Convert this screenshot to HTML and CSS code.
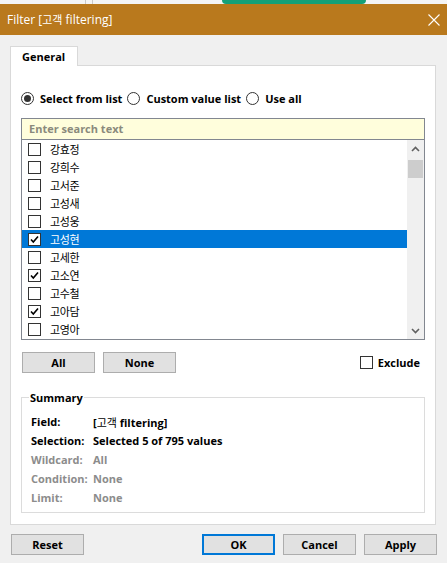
FILE: index.html
```html
<!DOCTYPE html>
<html lang="ko">
<head>
<meta charset="utf-8">
<title>Filter</title>
<link rel="stylesheet" href="styles.css">
</head>
<body>
<div class="strip"><span class="gap-a"></span><span class="vline"></span><span class="gap-b"></span><span class="vline"></span><span class="gap-c"></span><span class="pill"></span></div>
<div class="titlebar">
  <span class="title">Filter [<span class="ko">고객</span> filtering]</span>
  <svg class="close" width="12" height="12" viewBox="0 0 12 12"><path d="M0.5 0.5 L11.5 11.5 M11.5 0.5 L0.5 11.5" stroke="#ffffff" stroke-width="1.1" fill="none"/></svg>
</div>
<div class="dialog">
  <div class="tabrow"><div class="tab">General</div><div class="tabfill"></div></div>
  <div class="panel">
    <div class="radios">
      <label class="radio"><span class="rb on"></span>Select from list</label>
      <label class="radio"><span class="rb"></span>Custom value list</label>
      <label class="radio"><span class="rb"></span>Use all</label>
    </div>
    <div class="search">Enter search text</div>
    <div class="list">
      <div class="rows">
        <div class="row"><span class="cb"></span><span class="name">강효정</span></div>
        <div class="row"><span class="cb"></span><span class="name">강희수</span></div>
        <div class="row"><span class="cb"></span><span class="name">고서준</span></div>
        <div class="row"><span class="cb"></span><span class="name">고성새</span></div>
        <div class="row"><span class="cb"></span><span class="name">고성웅</span></div>
        <div class="row sel"><span class="cb on"><svg width="11" height="11" viewBox="0 0 11 11"><path d="M2 5.5 L4.3 8 L9 2.5" stroke="#000" stroke-width="1.6" fill="none"/></svg></span><span class="name">고성현</span></div>
        <div class="row"><span class="cb"></span><span class="name">고세한</span></div>
        <div class="row"><span class="cb on"><svg width="11" height="11" viewBox="0 0 11 11"><path d="M2 5.5 L4.3 8 L9 2.5" stroke="#000" stroke-width="1.6" fill="none"/></svg></span><span class="name">고소연</span></div>
        <div class="row"><span class="cb"></span><span class="name">고수철</span></div>
        <div class="row"><span class="cb on"><svg width="11" height="11" viewBox="0 0 11 11"><path d="M2 5.5 L4.3 8 L9 2.5" stroke="#000" stroke-width="1.6" fill="none"/></svg></span><span class="name">고아담</span></div>
        <div class="row"><span class="cb"></span><span class="name">고영아</span></div>
      </div>
      <div class="scrollbar">
        <div class="arrow"><svg width="9" height="6" viewBox="0 0 9 6"><path d="M1 5 L4.5 1.5 L8 5" stroke="#606060" stroke-width="1.6" fill="none"/></svg></div>
        <div class="thumb"></div>
        <div class="track"></div>
        <div class="arrow"><svg width="9" height="6" viewBox="0 0 9 6"><path d="M1 1 L4.5 4.5 L8 1" stroke="#606060" stroke-width="1.6" fill="none"/></svg></div>
      </div>
    </div>
    <div class="listbtns">
      <button class="btn">All</button>
      <button class="btn">None</button>
      <label class="exclude"><span class="cb"></span>Exclude</label>
    </div>
    <fieldset class="summary">
      <legend>Summary</legend>
      <div class="grid">
        <span class="lab">Field:</span><span class="val">[<span class="ko">고객</span> filtering]</span>
        <span class="lab">Selection:</span><span class="val">Selected 5 of 795 values</span>
        <span class="lab dim">Wildcard:</span><span class="val dim">All</span>
        <span class="lab dim">Condition:</span><span class="val dim">None</span>
        <span class="lab dim">Limit:</span><span class="val dim">None</span>
      </div>
    </fieldset>
  </div>
  <div class="footer">
    <button class="btn">Reset</button>
    <span class="spacer"></span>
    <button class="btn ok">OK</button>
    <button class="btn">Cancel</button>
    <button class="btn">Apply</button>
  </div>
</div>
</body>
</html>
```
FILE: styles.css
```css
* { box-sizing: border-box; }
html, body { margin: 0; padding: 0; }
body {
  width: 447px;
  height: 563px;
  overflow: hidden;
  background: #f0f0f0;
  font-family: "Open Sans", "Noto Sans CJK KR", sans-serif;
  font-size: 11px;
  font-weight: 700;
  color: #000;
}
.ko { font-family: "Noto Sans CJK KR", sans-serif; font-weight: 400; }

.strip { display: flex; height: 4px; background: #f4f4f4; }
.gap-a { width: 85px; }
.gap-b { width: 6px; }
.gap-c { width: 129px; }
.vline { width: 1px; background: #c9c9c9; }
.pill { width: 144px; background: #14a078; border-radius: 0 0 5px 5px; }

.titlebar {
  height: 31px;
  background: #b9791d;
  color: #fff;
  display: flex;
  align-items: center;
  justify-content: space-between;
  padding: 0 7px;
  font-size: 12px;
  font-weight: 400;
}
.titlebar .ko { font-size: 11px; }
.close { display: block; }

.dialog { padding: 11px 10px 0 10px; }

.tabrow { display: flex; width: 426px; height: 20px; }
.tab {
  width: 68px;
  height: 20px;
  background: #fff;
  border: 1px solid #d9d9d9;
  border-bottom: none;
  padding-left: 11px;
  line-height: 19px;
}
.tabfill { flex: 1; border-bottom: 1px solid #d9d9d9; }

.panel {
  width: 426px;
  height: 459px;
  background: #fff;
  border: 1px solid #d9d9d9;
  border-top: none;
  padding: 24px 10px 0 10px;
  display: flex;
  flex-direction: column;
}

.radios { display: flex; align-items: center; height: 16px; }
.radio { display: flex; align-items: center; margin-right: 5px; white-space: nowrap; }
.rb {
  width: 13px; height: 13px;
  border: 1px solid #333;
  border-radius: 50%;
  background: #fff;
  margin-right: 6px;
  display: flex; align-items: center; justify-content: center;
}
.rb.on::after { content: ""; width: 7px; height: 7px; border-radius: 50%; background: #333; }

.search {
  margin-top: 12px;
  height: 22px;
  border: 1px solid #828790;
  background: #fffedc;
  color: #8a8a7c;
  padding-left: 7px;
  line-height: 20px;
}

.list {
  height: 200px;
  border: 1px solid #828790;
  border-top: none;
  display: flex;
  overflow: hidden;
  background: #fff;
}
.rows { flex: 1; overflow: hidden; }
.row { height: 18px; display: flex; align-items: center; }
.row.sel { background: #0078d7; color: #fff; }
.cb {
  width: 13px; height: 13px;
  border: 1px solid #333;
  background: #fff;
  flex: none;
  display: flex; align-items: center; justify-content: center;
}
.cb svg { display: block; }
.row .cb { margin-left: 6px; margin-right: 9px; }
.name { font-family: "Noto Sans CJK KR", sans-serif; font-weight: 400; font-size: 11px; letter-spacing: -0.4px; }

.scrollbar { width: 17px; background: #f0f0f0; display: flex; flex-direction: column; }
.arrow { height: 17px; display: flex; align-items: center; justify-content: center; }
.arrow svg { display: block; }
.thumb { margin: 3px 0 0 1px; width: 15px; height: 18px; background: #cdcdcd; }
.track { flex: 1; }

.listbtns { margin-top: 12px; display: flex; align-items: center; height: 21px; }
.btn {
  width: 73px; height: 21px;
  border: 1px solid #adadad;
  background: #e1e1e1;
  font: inherit;
  color: #000;
  padding: 0;
  line-height: 18px;
}
.listbtns .btn:first-child { margin-left: 1px; margin-right: 8px; }
.exclude { margin-left: auto; margin-right: 5px; display: flex; align-items: center; }
.exclude .cb { margin-right: 5px; }

.summary {
  margin: 17px 0 0 0;
  border: 1px solid #dcdcdc;
  padding: 7px 9px 5px 9px;
  min-width: 0;
}
.summary legend { padding: 0 1px; margin-left: -2px; line-height: 15px; }
.grid { display: grid; grid-template-columns: 62px auto; grid-auto-rows: 19px; align-items: center; }
.dim { color: #8c8c8c; }

.footer { margin-top: 9px; display: flex; gap: 8px; }
.footer .btn:first-child { margin-left: 1px; }
.spacer { flex: 1; }
.btn.ok { border: 2px solid #0078d7; }
```
